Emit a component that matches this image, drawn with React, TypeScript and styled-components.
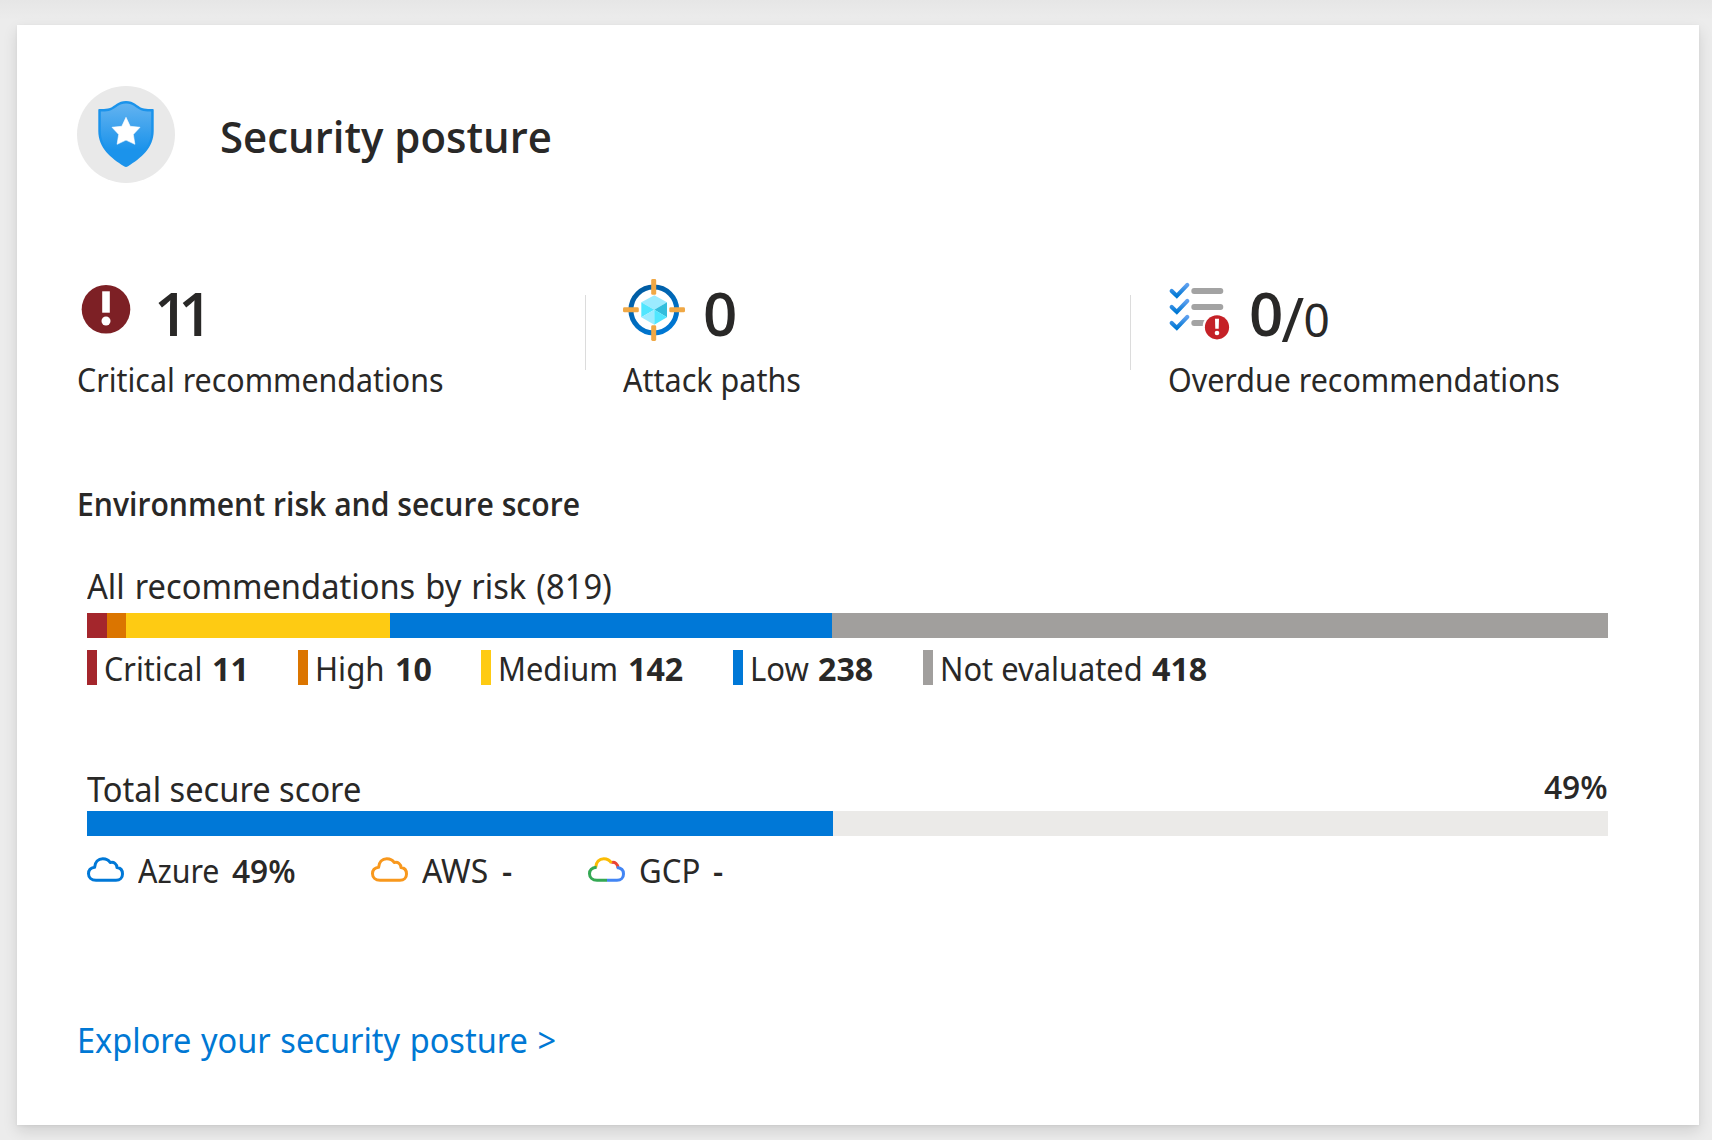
import React from 'react';
import styled, { createGlobalStyle } from 'styled-components';

const GlobalStyle = createGlobalStyle`
  * { box-sizing: border-box; }
  html, body { margin: 0; padding: 0; }
  body {
    background: linear-gradient(#e6e6e6 0, #ececec 20px);
    background-color: #ececec;
    color: #292827;
    font-family: 'Noto Sans', 'Open Sans', sans-serif;
    overflow: hidden;
  }
  svg { display: block; flex: none; overflow: visible; }
`;

const Page = styled.div`
  height: 1140px;
  padding: 25px 13px 15px 17px;
`;

const Card = styled.section`
  height: 1100px;
  padding: 61px 60px 0;
  background: #fff;
  box-shadow: 0 6px 14px rgba(0, 0, 0, 0.12), 0 1px 3px rgba(0, 0, 0, 0.05);
`;

/* Slightly condensed text that takes up an exact width in its row. */
const Fit = styled.span<{ $x: number; $w?: number; $space?: number }>`
  display: block;
  flex: none;
  width: ${(p) => (p.$w ? `${p.$w}px` : 'auto')};
  white-space: nowrap;
  word-spacing: ${(p) => p.$space ?? 0}px;
  transform: scaleX(${(p) => p.$x});
  transform-origin: 0 50%;
`;

const Header = styled.header`
  display: flex;
  height: 97px;
  gap: 45px;
`;

const Title = styled.h1`
  margin: 21px 0 0;
  font: 600 43px/60px 'Open Sans', sans-serif;
`;

const Stats = styled.div`
  display: grid;
  grid-template-columns: 508px 545px 1fr;
  margin-top: 87px;
  height: 131px;
`;

const Stat = styled.div`
  display: flex;
`;

const Divider = styled.div`
  flex: none;
  width: 1px;
  height: 75px;
  margin: 25px 37px 0 0;
  background: #dcdcdc;
`;

const StatTop = styled.div<{ $inset?: number }>`
  display: flex;
  height: 88px;
  padding-left: ${(p) => p.$inset ?? 0}px;
`;

const IconBox = styled.div<{ $w: number; $top: number }>`
  flex: none;
  width: ${(p) => p.$w}px;
  padding-top: ${(p) => p.$top}px;
`;

const Big = styled.span<{ $track?: number }>`
  margin-top: 13px;
  font: 600 60px/60px 'Open Sans', sans-serif;
  letter-spacing: ${(p) => p.$track ?? 0}px;
`;

const Slash = styled.span`
  margin: 18px 0 0 -2px;
  font-size: 62px;
  line-height: 60px;
`;

const Small = styled.span`
  margin: 19px 0 0 -1px;
  font-size: 46px;
  line-height: 60px;
`;

const Label = styled.div`
  font-size: 33px;
  line-height: 44px;
`;

const SectionTitle = styled.h2`
  margin: 81px 0 0;
  font: 600 33px/44px 'Open Sans', sans-serif;
`;

const Block = styled.div<{ $top: number }>`
  width: 1521px;
  margin: ${(p) => p.$top}px 0 0 10px;
`;

const BlockHead = styled.div`
  display: flex;
  justify-content: space-between;
  font-size: 35px;
  line-height: 46px;
`;

const Percent = styled.div`
  font: 600 33px/42px 'Open Sans', sans-serif;
`;

const Bar = styled.div<{ $top: number }>`
  display: flex;
  height: 25px;
  margin-top: ${(p) => p.$top}px;
  background: #ebeae8;
`;

const Segment = styled.div<{ $color: string; $w: string }>`
  flex: none;
  width: ${(p) => p.$w};
  background: ${(p) => p.$color};
`;

const Legend = styled.div`
  display: grid;
  grid-template-columns: 211px 183px 252px 190px 1fr;
  margin-top: 9px;
  font-size: 33px;
  line-height: 44px;
`;

const LegendItem = styled.div`
  display: flex;
`;

const Swatch = styled.i<{ $color: string }>`
  flex: none;
  width: 10px;
  height: 35px;
  margin: 3px 7px 0 0;
  background: ${(p) => p.$color};
`;

const Count = styled.b`
  font: 700 33px/44px 'Open Sans', sans-serif;
`;

const Providers = styled.div`
  display: grid;
  grid-template-columns: 284px 217px 1fr;
  margin-top: 13px;
  font-size: 33px;
  line-height: 44px;
`;

const Provider = styled.div`
  display: flex;
`;

const CloudBox = styled.div`
  width: 50.5px;
  flex: none;
  padding-top: 8px;
`;

const Value = styled.span`
  font: 600 33px/44px 'Open Sans', sans-serif;
`;

const Explore = styled.a`
  display: block;
  margin: 124px 0 0;
  color: #0078d4;
  font-size: 35px;
  line-height: 46px;
  text-decoration: none;
`;

const ShieldBadge = () => (
  <svg width="98" height="97" viewBox="0 0 98 97">
    <defs>
      <linearGradient id="shield" x1="0" y1="0" x2="0" y2="1">
        <stop offset="0" stopColor="#63b3f0" />
        <stop offset="0.75" stopColor="#1b93eb" />
      </linearGradient>
    </defs>
    <ellipse cx="49" cy="48.5" rx="49" ry="48.5" fill="#e9e9e9" />
    <path
      d="M49 15C57 15 60 20 65 22C69 23.3 73 23 76 23Q76.7 23 76.7 24V45C76.7 62 64 72 51 80.3Q49 81.5 47 80.3C34 72 21.3 62 21.3 45V24Q21.3 23 22 23C25 23 29 23.3 33 22C38 20 41 15 49 15Z"
      fill="#1b93eb"
    />
    <path
      d="M49 17.6C56 17.6 59 22.2 64 24.2C68 25.6 71 25.4 74.2 25.4V45C74.2 61 62 70.5 49 79C36 70.5 23.8 61 23.8 45V25.4C27 25.4 30 25.6 34 24.2C39 22.2 42 17.6 49 17.6Z"
      fill="url(#shield)"
    />
    <path
      d="M49 31.3L53.2 40.3L63 41.3L56.3 48.4L57.9 58.3L49 54.1L40.1 58.3L41.7 48.4L35 41.3L44.8 40.3Z"
      fill="#fff"
      stroke="#fff"
      strokeWidth="0.6"
      strokeLinejoin="round"
    />
  </svg>
);

const CriticalIcon = () => (
  <svg width="58" height="49" viewBox="0 0 58 49">
    <circle cx="29" cy="24.3" r="24.3" fill="#7d2025" />
    <rect x="25.2" y="6.3" width="7.6" height="21.4" fill="#fff" />
    <circle cx="29" cy="36" r="4.5" fill="#fff" />
  </svg>
);

const TargetIcon = () => (
  <svg width="62" height="62" viewBox="0 0 62 62">
    <defs>
      <linearGradient id="ring" x1="0.2" y1="0" x2="0.7" y2="1">
        <stop offset="0" stopColor="#005ba1" />
        <stop offset="1" stopColor="#0078d4" />
      </linearGradient>
    </defs>
    <circle cx="30.8" cy="31" r="22.9" fill="none" stroke="url(#ring)" strokeWidth="5" />
    <g fill="#f0a845">
      <rect x="28.2" y="0" width="5" height="15.8" rx="1.4" />
      <rect x="28.2" y="46.3" width="5" height="15.7" rx="1.4" />
      <rect x="0" y="28.3" width="15.8" height="5" rx="1.4" />
      <rect x="46.3" y="28.3" width="15.7" height="5" rx="1.4" />
    </g>
    <path d="M31.3 16.3L44 23.3L31.3 30.8L18.3 23.3Z" fill="#9cebff" />
    <path d="M18.3 23.3L31.3 30.8L18.3 38.3Z" fill="#50e6ff" />
    <path d="M18.3 38.3L31.3 30.8V45.7Z" fill="#9cebff" />
    <path d="M44 23.3V38.3L31.3 30.8Z" fill="#32bedd" />
    <path d="M44 38.3L31.3 45.7V30.8Z" fill="#50e6ff" />
  </svg>
);

const ChecklistIcon = () => (
  <svg width="62" height="60" viewBox="0 0 62 60">
    <defs>
      <linearGradient id="tick" x1="0" y1="0" x2="0" y2="1">
        <stop offset="0" stopColor="#5ea0ef" />
        <stop offset="1" stopColor="#0078d4" />
      </linearGradient>
    </defs>
    {[0, 16, 32].map((y) => (
      <g key={y} transform={`translate(0 ${y})`}>
        <path
          d="M2.7 9L7.8 13.9L18.3 2.9"
          fill="none"
          stroke="url(#tick)"
          strokeWidth="4.2"
          strokeLinejoin="miter"
          strokeLinecap="round"
        />
        <rect x="22.3" y="6" width="32" height="5.9" rx="2.9" fill="#a3a3a3" />
      </g>
    ))}
    <circle cx="48" cy="45.3" r="14.4" fill="#fff" />
    <circle cx="48" cy="45.3" r="12.1" fill="#c52127" />
    <path d="M46 36.7H50L49.7 46.8H46.3Z" fill="#fff" />
    <circle cx="48" cy="51" r="2.3" fill="#fff" />
  </svg>
);

const CLOUD =
  'M9 23.3C4.5 23.3 1.5 20.5 1.5 16.8C1.5 13.2 4 10.8 7.6 10.3C8 5.2 11.2 1.7 15.8 1.7C19 1.7 21.8 3.2 23.2 5.6C27 4.6 29.8 7 30 10.6C33.5 11 35.5 13.4 35.5 16.9C35.5 20.6 33 23.3 29 23.3Z';

const Cloud = ({ color }: { color: string }) => (
  <svg width="37" height="26" viewBox="0 0 37 26">
    <path d={CLOUD} fill="none" stroke={color} strokeWidth="3" strokeLinejoin="round" />
  </svg>
);

const GoogleCloud = () => (
  <svg width="37" height="26" viewBox="0 0 37 26" fill="none" strokeWidth="3">
    <path d="M23.2 5.6C27 4.6 29.8 7 30 11" stroke="#ea4335" />
    <path d="M7.6 10.6C8 5.2 11.2 1.7 15.8 1.7C19 1.7 21.8 3.2 23.4 6" stroke="#fbbc04" />
    <path d="M19 23.3H9C4.5 23.3 1.5 20.5 1.5 16.8C1.5 13.2 4 10.8 8.6 10.3" stroke="#34a853" />
    <path d="M28.8 10.6C33.5 11 35.5 13.4 35.5 16.9C35.5 20.6 33 23.3 29 23.3H19" stroke="#4285f4" />
  </svg>
);

const risks = [
  { name: 'Critical', count: 11, color: '#a4262c', bar: 20, x: 0.925, w: 108 },
  { name: 'High', count: 10, color: '#db7500', bar: 19, x: 0.945, w: 79.5 },
  { name: 'Medium', count: 142, color: '#fecb13', bar: 264, x: 0.933, w: 129.5 },
  { name: 'Low', count: 238, color: '#0078d7', bar: 442, x: 0.94, w: 67.5 },
  { name: 'Not evaluated', count: 418, color: '#a19f9d', bar: 776, x: 0.934, w: 212 },
];

const providers = [
  { name: 'Azure', value: '49%', icon: <Cloud color="#0078d7" />, x: 0.92, w: 94.5 },
  { name: 'AWS', value: '-', icon: <Cloud color="#f8981d" />, x: 0.965, w: 80 },
  { name: 'GCP', value: '-', icon: <GoogleCloud />, x: 0.945, w: 74.5 },
];

export default function App() {
  return (
    <>
      <GlobalStyle />
      <Page>
        <Card>
          <Header>
            <ShieldBadge />
            <Title>
              <Fit $x={0.975}>Security posture</Fit>
            </Title>
          </Header>

          <Stats>
            <Stat>
              <div>
                <StatTop>
                  <IconBox $w={77} $top={15}>
                    <CriticalIcon />
                  </IconBox>
                  <Big $track={-10}>11</Big>
                </StatTop>
                <Label>
                  <Fit $x={0.92}>Critical recommendations</Fit>
                </Label>
              </div>
            </Stat>
            <Stat>
              <Divider />
              <div>
                <StatTop>
                  <IconBox $w={80} $top={9}>
                    <TargetIcon />
                  </IconBox>
                  <Big>0</Big>
                </StatTop>
                <Label>
                  <Fit $x={0.925}>Attack paths</Fit>
                </Label>
              </div>
            </Stat>
            <Stat>
              <Divider />
              <div>
                <StatTop $inset={1}>
                  <IconBox $w={80} $top={12}>
                    <ChecklistIcon />
                  </IconBox>
                  <Big>0</Big>
                  <Slash>/</Slash>
                  <Small>0</Small>
                </StatTop>
                <Label>
                  <Fit $x={0.921}>Overdue recommendations</Fit>
                </Label>
              </div>
            </Stat>
          </Stats>

          <SectionTitle>
            <Fit $x={0.913}>Environment risk and secure score</Fit>
          </SectionTitle>

          <Block $top={37}>
            <BlockHead>
              <Fit $x={0.933} $space={1.6}>
                All recommendations by risk (819)
              </Fit>
            </BlockHead>
            <Bar $top={4}>
              {risks.map((r) => (
                <Segment key={r.name} $color={r.color} $w={`${r.bar}px`} />
              ))}
            </Bar>
            <Legend>
              {risks.map((r) => (
                <LegendItem key={r.name}>
                  <Swatch $color={r.color} />
                  <Fit $x={r.x} $w={r.w}>
                    {r.name}
                  </Fit>
                  <Count>
                    <Fit $x={0.975}>{r.count}</Fit>
                  </Count>
                </LegendItem>
              ))}
            </Legend>
          </Block>

          <Block $top={75}>
            <BlockHead>
              <Fit $x={0.932}>Total secure score</Fit>
              <Percent>
                <Fit $x={0.96} $w={64}>
                  49%
                </Fit>
              </Percent>
            </BlockHead>
            <Bar $top={-1}>
              <Segment $color="#0078d7" $w="746px" />
            </Bar>
            <Providers>
              {providers.map((p) => (
                <Provider key={p.name}>
                  <CloudBox>{p.icon}</CloudBox>
                  <Fit $x={p.x} $w={p.w}>
                    {p.name}
                  </Fit>
                  <Value>
                    <Fit $x={0.96}>{p.value}</Fit>
                  </Value>
                </Provider>
              ))}
            </Providers>
          </Block>

          <Explore href="#">
            <Fit $x={0.929} $space={1.2}>
              Explore your security posture &gt;
            </Fit>
          </Explore>
        </Card>
      </Page>
    </>
  );
}
